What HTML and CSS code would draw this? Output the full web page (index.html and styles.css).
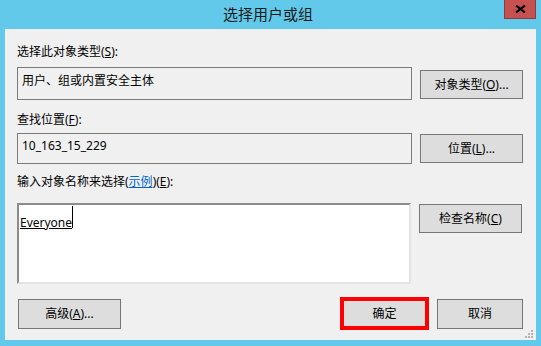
FILE: index.html
```html
<!DOCTYPE html>
<html lang="zh-CN">
<head>
<meta charset="utf-8">
<title>选择用户或组</title>
<link rel="stylesheet" href="styles.css">
</head>
<body>
<div class="window">
  <div class="titlebar">
    <span class="title">选择用户或组</span>
    <button class="close" aria-label="关闭">
      <svg width="11" height="8" viewBox="0 0 11 8"><path d="M1 0.5 L10 7.5 M10 0.5 L1 7.5" stroke="#000" stroke-width="2.2" fill="none"/></svg>
    </button>
  </div>
  <div class="client">
    <div class="label">选择此对象类型(<u>S</u>):</div>
    <div class="row row1">
      <div class="field field1">用户、组或内置安全主体</div>
      <button class="btn btn-r1">对象类型(<u>O</u>)...</button>
    </div>
    <div class="label label2">查找位置(<u>F</u>):</div>
    <div class="row row2">
      <div class="field field2">10_163_15_229</div>
      <button class="btn btn-r2">位置(<u>L</u>)...</button>
    </div>
    <div class="label label3">输入对象名称来选择(<a class="link">示例</a>)(<u>E</u>):</div>
    <div class="row row3">
      <div class="input"><span class="name">Everyone</span><span class="caret"></span></div>
      <button class="btn btn-r3">检查名称(<u>C</u>)</button>
    </div>
    <div class="footer">
      <button class="btn btn-adv">高级(<u>A</u>)...</button>
      <span class="spacer"></span>
      <button class="btn btn-ok">确定</button>
      <button class="btn btn-cancel">取消</button>
    </div>
    <svg class="grip" width="9" height="9" viewBox="0 0 9 9">
      <rect x="7" y="1" width="2" height="2" fill="#b5b5b5"/>
      <rect x="4" y="4" width="2" height="2" fill="#b5b5b5"/>
      <rect x="7" y="4" width="2" height="2" fill="#b5b5b5"/>
      <rect x="1" y="7" width="2" height="2" fill="#b5b5b5"/>
      <rect x="4" y="7" width="2" height="2" fill="#b5b5b5"/>
      <rect x="7" y="7" width="2" height="2" fill="#b5b5b5"/>
    </svg>
  </div>
</div>
</body>
</html>
```
FILE: styles.css
```css
html, body {
  margin: 0;
  padding: 0;
}
body {
  width: 541px;
  height: 346px;
  background: #63C9EA;
  font-family: "Noto Sans", "Noto Sans CJK SC", sans-serif;
  font-size: 12px;
  line-height: 16px;
  color: #000;
  overflow: hidden;
}
.window {
  width: 541px;
  height: 346px;
}
.titlebar {
  display: grid;
  grid-template-columns: 1fr 32px;
  height: 29px;
  padding-right: 5px;
}
.title {
  grid-row: 1;
  grid-column: 1 / -1;
  text-align: center;
  font-size: 15px;
  line-height: 28px;
  color: #1b1b1b;
}
.close {
  grid-row: 1;
  grid-column: 2;
  height: 19px;
  padding: 0;
  margin: 0;
  background: #C75050;
  border: 1px solid #8e3b3b;
  border-top: none;
  display: flex;
  align-items: center;
  justify-content: center;
}
.client {
  position: relative;
  margin: 0 5px;
  height: 311px;
  box-sizing: border-box;
  background: #F0F0F0;
  padding: 15px 13px 0 12px;
  display: flex;
  flex-direction: column;
}
.label {
  height: 16px;
  line-height: 16px;
  white-space: nowrap;
}
.label2 { margin-top: 12px; }
.label3 { margin-top: 10px; }
.link {
  color: #0066CC;
  text-decoration: underline;
}
.row {
  display: flex;
  gap: 8px;
  align-items: flex-start;
}
.row1 { margin-top: 7px; }
.row2 { margin-top: 5px; }
.row3 { margin-top: 13px; }
.field {
  width: 395px;
  box-sizing: border-box;
  border: 1px solid #7A7A7A;
  padding: 0 4px;
  background: #F0F0F0;
}
.field1 {
  height: 33px;
  padding-top: 5px;
}
.field2 {
  height: 31px;
  padding-top: 4px;
}
.btn {
  width: 103px;
  height: 29px;
  box-sizing: border-box;
  margin: 0;
  padding: 0;
  background: #DDDDDD;
  border: 1px solid #777777;
  font: inherit;
  color: #000;
  text-align: center;
  white-space: nowrap;
}
.btn-r1 { margin-top: 3px; }
.btn-r2 { margin-top: 1px; }
.btn-r3 { margin-top: 1px; }
.input {
  width: 394px;
  height: 81px;
  box-sizing: border-box;
  background: #FFFFFF;
  border-style: solid;
  border-width: 2px 2px 2px 2px;
  border-color: #8C8C8C #E3E3E3 #E3E3E3 #8C8C8C;
  padding: 1px 0 0 1px;
  display: flex;
  align-items: flex-start;
}
.name {
  margin-top: 8px;
  line-height: 18px;
  text-decoration: underline;
}
.caret {
  display: inline-block;
  width: 1px;
  height: 22px;
  margin-top: 0;
  background: #000;
}
.footer {
  margin-top: 13px;
  display: flex;
  align-items: center;
  height: 33px;
}
.spacer { flex: 1; }
.btn-adv {
  width: 103px;
  height: 30px;
  margin-left: 1px;
}
.btn-ok {
  width: 89px;
  height: 33px;
  border: 4px solid #FF0000;
}
.btn-cancel {
  width: 86px;
  height: 30px;
  margin-left: 8px;
}
.grip {
  position: absolute;
  right: 3px;
  bottom: 2px;
}
```
